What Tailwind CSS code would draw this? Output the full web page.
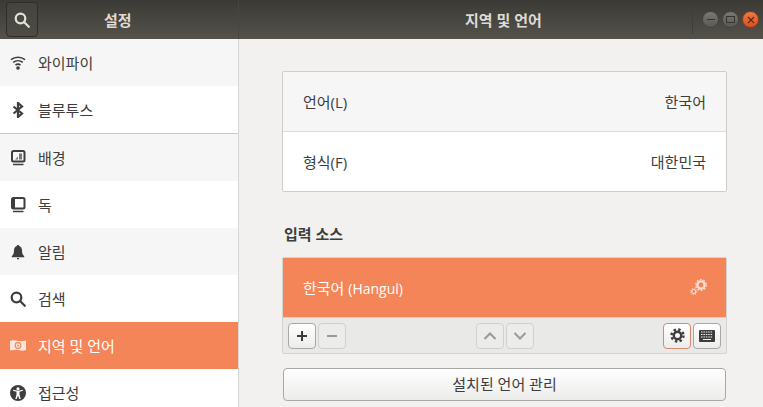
<!DOCTYPE html>
<html lang="ko"><head><meta charset="utf-8">
<script src="https://cdn.jsdelivr.net/npm/@tailwindcss/browser@4"></script>
</head>
<body class="m-0 overflow-hidden">
<div class="w-[763px] h-[407px] overflow-hidden flex flex-col bg-[#f2f1f0] text-[15px] text-[#3d3d3d] font-['Open_Sans','Noto_Sans_CJK_KR',sans-serif]">
  <header class="h-[39px] shrink-0 flex bg-gradient-to-b from-[#3b3a36] to-[#55524b] text-[#dfdbd2]">
    <div class="w-[239px] shrink-0 flex items-center border-r border-[#47453f] pl-[6px] relative">
      <div class="w-[32px] h-[35px] rounded-[4px] border border-[#2e2d2a] bg-[#4b4943]/60 flex items-center justify-center">
        <svg width="16" height="16" viewBox="0 0 16 16" fill="none" stroke="#e4e1da" stroke-width="2.200"><circle cx="6.500" cy="6.500" r="4.800"/><path d="M10 10l4.800 4.800" stroke-linecap="round"/></svg>
      </div>
      <span class="absolute left-[104px] top-[10px] leading-[21px] font-bold">설정</span>
    </div>
    <div class="flex-1 flex items-center relative">
      <span class="absolute left-[226px] top-[10px] leading-[21px] font-bold">지역 및 언어</span>
      <div class="ml-auto flex items-center gap-[3px] pr-[4px]">
        <div class="h-[28px] w-px bg-[#3f3e39] mr-[6px]"></div>
        <div class="w-[17px] h-[17px] rounded-full bg-gradient-to-b from-[#7b7973] to-[#5a5852] border border-[#44423d] flex items-center justify-center"><div class="w-[8px] h-px bg-[#36352f]"></div></div>
        <div class="w-[17px] h-[17px] rounded-full bg-gradient-to-b from-[#7b7973] to-[#5a5852] border border-[#44423d] flex items-center justify-center"><div class="w-[9px] h-[7px] border border-[#36352f]"></div></div>
        <div class="w-[17px] h-[17px] rounded-full bg-gradient-to-b from-[#ee7a43] to-[#dc4f1b] border border-[#7a4226] flex items-center justify-center">
          <svg width="8" height="8" viewBox="0 0 8 8" stroke="#5b2a12" stroke-width="1.200"><path d="M1 1l6 6M7 1L1 7"/></svg>
        </div>
      </div>
    </div>
  </header>
  <div class="flex-1 flex min-h-0">
    <nav class="w-[239px] shrink-0 bg-white border-r border-[#d6d6d4] flex flex-col">
      <div class="h-[47px] shrink-0 flex items-center bg-[#f6f6f6]">
        <svg class="ml-[10px] w-[16px] h-[16px]" viewBox="0 0 16 16" fill="none" stroke="#3d3d3d" stroke-width="1.600"><path d="M1 4.600c4-3.200 10-3.200 14 0M3.200 7.400c2.800-2.200 6.800-2.200 9.600 0M5.500 10c1.500-1.100 3.500-1.100 5 0"/><circle cx="8" cy="13" r="1.800" fill="#3d3d3d" stroke="none"/></svg>
        <span class="ml-[12px] pt-[2px]">와이파이</span>
      </div>
      <div class="h-[47px] shrink-0 flex items-center">
        <svg class="ml-[10px] w-[16px] h-[16px]" viewBox="0 0 16 16" fill="none" stroke="#3d3d3d" stroke-width="2.200"><path d="M3.500 4.500l8.500 7-4 3.500V1l4 3.500-8.500 7"/></svg>
        <span class="ml-[12px] pt-[2px]">블루투스</span>
      </div>
      <div class="h-px shrink-0 bg-[#c9c9c7]"></div>
      <div class="h-[47px] shrink-0 flex items-center bg-[#f6f6f6]">
        <svg class="ml-[10px] w-[16px] h-[16px]" viewBox="0 0 16 16" fill="none"><rect x="2" y="1" width="12.500" height="10.500" rx="1.500" stroke="#3d3d3d" stroke-width="2"/><path d="M3 14.500h10.500" stroke="#3d3d3d" stroke-width="1.500"/><path d="M5 9.500l3-3v3zM9 3.500h3v6H9z" fill="#777"/></svg>
        <span class="ml-[12px] pt-[2px]">배경</span>
      </div>
      <div class="h-[47px] shrink-0 flex items-center">
        <svg class="ml-[10px] w-[16px] h-[16px]" viewBox="0 0 16 16" fill="none"><rect x="2" y="1" width="12.500" height="10.500" rx="1.500" stroke="#3d3d3d" stroke-width="2"/><path d="M3 14.500h10.500" stroke="#3d3d3d" stroke-width="1.500"/><path d="M3 2h2v9H3z" fill="#3d3d3d"/></svg>
        <span class="ml-[12px] pt-[2px]">독</span>
      </div>
      <div class="h-[47px] shrink-0 flex items-center bg-[#f6f6f6]">
        <svg class="ml-[10px] w-[16px] h-[16px]" viewBox="0 0 16 16" fill="#3d3d3d"><path d="M8 1c-.8 0-1.200.5-1.300 1.100C4.800 2.700 4 4.400 4 6.500c0 2.900-.8 4.500-2.200 5.500v1.300h12.400V12c-1.400-1-2.200-2.600-2.200-5.500 0-2.100-.8-3.800-2.700-4.400C9.200 1.500 8.800 1 8 1z"/><path d="M7 14h2v1.200H7z"/></svg>
        <span class="ml-[12px] pt-[2px]">알림</span>
      </div>
      <div class="h-[47px] shrink-0 flex items-center">
        <svg class="ml-[10px] w-[16px] h-[16px]" viewBox="0 0 16 16" fill="none" stroke="#3d3d3d" stroke-width="2.200"><circle cx="6.500" cy="6.500" r="4.800"/><path d="M10 10l4.800 4.800" stroke-linecap="round"/></svg>
        <span class="ml-[12px] pt-[2px]">검색</span>
      </div>
      <div class="h-[47px] shrink-0 flex items-center bg-[#f48559] text-white">
        <svg class="ml-[10px] w-[16px] h-[16px]" viewBox="0 0 16 16" fill="none"><path d="M0 3c3-1.300 5-.3 8 0s5 .2 8-.5V12c-3 1.200-5 .5-8 0s-5-.3-8 .5z" fill="#fbe7df"/><circle cx="8" cy="7.500" r="2.800" stroke="#f48559" stroke-width="1.200"/><circle cx="8" cy="7.500" r=".9" fill="#f48559"/></svg>
        <span class="ml-[12px] pt-[2px]">지역 및 언어</span>
      </div>
      <div class="h-[47px] shrink-0 flex items-center">
        <svg class="ml-[10px] w-[16px] h-[16px]" viewBox="0 0 16 16"><circle cx="8" cy="8" r="8" fill="#3d3d3d"/><circle cx="8" cy="3.800" r="1.600" fill="#fff"/><path d="M3 5.800l3.500 1v2.700L5.300 14h1.400L8 10.500 9.300 14h1.400L9.500 9.500V6.800l3.500-1-.2-1L8 5.800 3.200 4.800z" fill="#fff"/></svg>
        <span class="ml-[12px] pt-[2px]">접근성</span>
      </div>
    </nav>
    <main class="flex-1 min-w-0 pt-[32px] pl-[43px] pr-[36px] flex flex-col">
      <section class="h-[121px] shrink-0 bg-white border border-[#cdcdcb] rounded-[2px] flex flex-col">
        <div class="h-[59px] shrink-0 flex items-center justify-between px-[20px] bg-[#f6f6f6]"><span class="pt-[2px]">언어(L)</span><span class="pt-[2px]">한국어</span></div>
        <div class="h-px shrink-0 bg-[#dcdcda]"></div>
        <div class="h-[59px] shrink-0 flex items-center justify-between px-[20px]"><span class="pt-[2px]">형식(F)</span><span class="pt-[2px]">대한민국</span></div>
      </section>
      <h2 class="mt-[31px] ml-[2px] h-[22px] leading-[22px] font-bold">입력 소스</h2>
      <section class="mt-[12px] h-[97px] shrink-0 border border-[#d3d3d1] rounded-[2px] bg-[#e9e9e8] flex flex-col">
        <div class="h-[59px] shrink-0 bg-[#f48559] text-white flex items-center justify-between pl-[20px] pr-[19px]">
          <span class="pt-[2px]">한국어 <span class="text-[14px]">(Hangul)</span></span>
          <svg width="17" height="17" viewBox="0 0 17 17" fill="none" stroke="#fcdccd"><circle cx="11" cy="6" r="3.600" stroke-width="2.400"/><circle cx="11" cy="6" r="5.300" stroke-width="1.400" stroke-dasharray="1.700 1.630"/><circle cx="3.800" cy="12.500" r="2" stroke-width="1.200"/><circle cx="3.800" cy="12.500" r="3.200" stroke-width="1" stroke-dasharray="1.200 1.310"/></svg>
        </div>
        <div class="flex-1 border-t border-[#d3d3d1] flex items-center pl-[5px] pr-[5px]">
          <button class="w-[28px] h-[26px] rounded-[4px] border border-[#a8a8a6] bg-gradient-to-b from-white to-[#ececeb] flex items-center justify-center">
            <svg width="12" height="12" viewBox="0 0 12 12" stroke="#3d3d3d" stroke-width="2"><path d="M6 1v10M1 6h10"/></svg>
          </button>
          <button class="ml-[2px] w-[28px] h-[26px] rounded-[4px] border border-[#d0d0ce] bg-[#ececeb] flex items-center justify-center">
            <svg width="12" height="12" viewBox="0 0 12 12" stroke="#999" stroke-width="2"><path d="M1 6h10"/></svg>
          </button>
          <button class="ml-[130px] w-[28px] h-[26px] rounded-[4px] border border-[#d0d0ce] bg-[#ececeb] flex items-center justify-center">
            <svg width="14" height="14" viewBox="0 0 14 14" fill="none" stroke="#999" stroke-width="2"><path d="M1.500 10l5.500-5.500 5.500 5.500"/></svg>
          </button>
          <button class="ml-[2px] w-[28px] h-[26px] rounded-[4px] border border-[#d0d0ce] bg-[#ececeb] flex items-center justify-center">
            <svg width="14" height="14" viewBox="0 0 14 14" fill="none" stroke="#999" stroke-width="2"><path d="M1.500 4l5.500 5.500 5.500-5.500"/></svg>
          </button>
          <button class="ml-auto w-[28px] h-[26px] rounded-[4px] border border-[#d98a6e] bg-gradient-to-b from-white to-[#ececeb] flex items-center justify-center">
            <svg width="15" height="15" viewBox="0 0 15 15" fill="none" stroke="#3d3d3d"><circle cx="7.500" cy="7.500" r="3.700" stroke-width="2.400"/><circle cx="7.500" cy="7.500" r="6" stroke-width="2.400" stroke-dasharray="2.400 2.310"/></svg>
          </button>
          <button class="ml-[2px] w-[28px] h-[26px] rounded-[4px] border border-[#a8a8a6] bg-gradient-to-b from-white to-[#ececeb] flex items-center justify-center">
            <svg width="16" height="12" viewBox="0 0 16 12"><rect width="16" height="12" rx="1" fill="#3d3d3d"/><path d="M2 2h12M2 4.500h12M2 7h12" stroke="#f4f4f4" stroke-dasharray="1.500 .9"/><path d="M4 9.500h8" stroke="#f4f4f4"/></svg>
          </button>
        </div>
      </section>
      <button class="mt-[14px] ml-px w-[443px] h-[33px] shrink-0 rounded-[4px] border border-[#a8a8a6] bg-gradient-to-b from-white to-[#ececeb] flex items-center justify-center">설치된 언어 관리</button>
    </main>
  </div>
</div>
</body></html>
